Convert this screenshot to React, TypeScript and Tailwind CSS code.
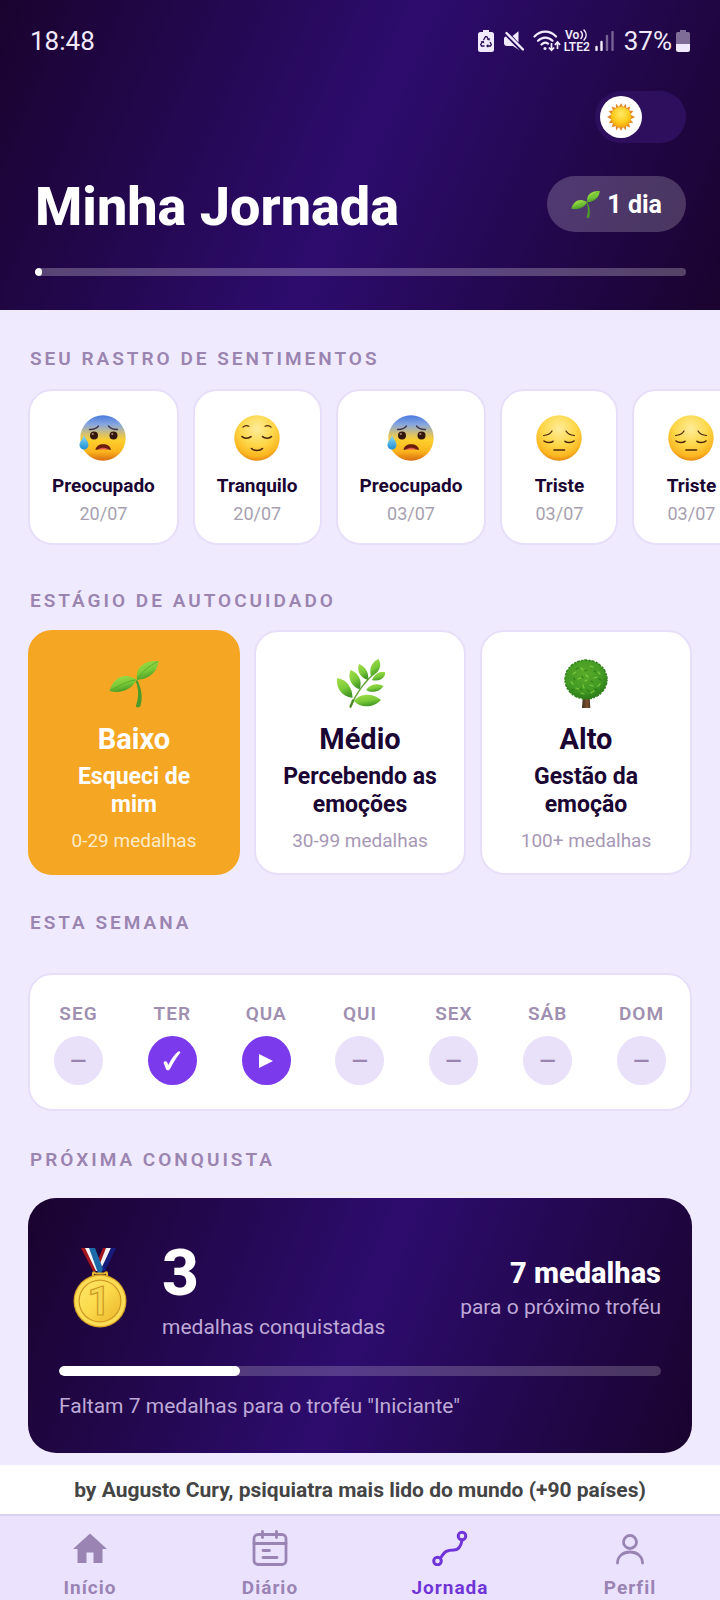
import { useState } from "react";
import type { ReactNode } from "react";

type FeelingKind = "worried" | "calm" | "sad";

type Feeling = {
  id: number;
  kind: FeelingKind;
  name: string;
  date: string;
};

const FEELINGS: Feeling[] = [
  { id: 1, kind: "worried", name: "Preocupado", date: "20/07" },
  { id: 2, kind: "calm", name: "Tranquilo", date: "20/07" },
  { id: 3, kind: "worried", name: "Preocupado", date: "03/07" },
  { id: 4, kind: "sad", name: "Triste", date: "03/07" },
  { id: 5, kind: "sad", name: "Triste", date: "03/07" },
];

const WEEK = [
  { label: "SEG", status: "empty" },
  { label: "TER", status: "done" },
  { label: "QUA", status: "today" },
  { label: "QUI", status: "empty" },
  { label: "SEX", status: "empty" },
  { label: "SÁB", status: "empty" },
  { label: "DOM", status: "empty" },
];

function FeelingFace({ kind }: { kind: FeelingKind }) {
  const fill = kind === "worried" ? "url(#face-worried)" : "url(#face-yellow)";

  return (
    <svg viewBox="0 0 46 46" className="h-[46px] w-[46px] overflow-visible" aria-hidden="true">
      <defs>
        <radialGradient id="face-yellow" cx="0.5" cy="0.3" r="0.74">
          <stop offset="0" stopColor="#ffec9a" />
          <stop offset="0.5" stopColor="#fdd748" />
          <stop offset="0.82" stopColor="#fbb41f" />
          <stop offset="1" stopColor="#dc7410" />
        </radialGradient>
        <linearGradient id="face-worried" x1="0" y1="0" x2="0" y2="1">
          <stop offset="0" stopColor="#4a7be0" />
          <stop offset="0.2" stopColor="#86a6e0" />
          <stop offset="0.42" stopColor="#d9c268" />
          <stop offset="0.55" stopColor="#fdcf2c" />
          <stop offset="0.8" stopColor="#fbb41d" />
          <stop offset="1" stopColor="#d96c10" />
        </linearGradient>
        <linearGradient id="drop" x1="0" y1="0" x2="0" y2="1">
          <stop offset="0" stopColor="#8fdcf8" />
          <stop offset="1" stopColor="#1c8fd2" />
        </linearGradient>
      </defs>
      <circle cx="23" cy="23" r="22.7" fill={fill} />

      {kind === "worried" && (
        <>
          <circle cx="14" cy="20.5" r="4" fill="#33170c" />
          <circle cx="33.5" cy="20.5" r="4" fill="#33170c" />
          <circle cx="12.8" cy="19" r="1.1" fill="#a58a79" />
          <circle cx="32.3" cy="19" r="1.1" fill="#a58a79" />
          <path d="M9.5 14.5c4 .2 7-1.200 9-3.500M37.500 14.500c-4 .2-7-1.200-9-3.500" fill="none" stroke="#3c3552" strokeWidth="1.300" strokeLinecap="round" />
          <path d="M15.500 35c.5-3.800 3.500-5.700 7.700-5.700s7.300 1.900 7.800 5.700c-4.800-1.500-10.700-1.500-15.500 0Z" fill="#6b1d0c" />
          <path d="M18.500 34.200c2-2 7.500-2 9.500 0Z" fill="#e5535a" />
          <path d="M4 20C3 24-.5 26.500-.5 30A4.500 4.500 0 0 0 8.500 30C8.500 26.500 5.500 24 4 20Z" fill="url(#drop)" />
        </>
      )}

      {kind === "calm" && (
        <g fill="none" stroke="#4a2409" strokeWidth="1.600" strokeLinecap="round">
          <path d="M9 12.200c1.500-1.700 3.800-1.900 6-1M31 11.200c2.200-.9 4.500-.7 6 1" strokeWidth="1.200" />
          <path d="M8 21.500c2 2.300 6.500 2.300 9 .2M28.500 21.700c2.500 2.100 7 2.100 9-.2" />
          <path d="M17.500 33.500c2.500 2.600 8.500 2.600 11 0" />
        </g>
      )}

      {kind === "sad" && (
        <g fill="none" stroke="#4a2409" strokeWidth="1.600" strokeLinecap="round">
          <path d="M7.500 20.500c4-.2 7-2 8.500-4.500M38.500 20.500c-4-.2-7-2-8.500-4.500" strokeWidth="1.200" />
          <path d="M8 26c2.500 2 7 2 9 .3M29 26.300c2 1.700 6.500 1.700 9-.3" />
          <path d="M18 35h10.500" />
        </g>
      )}
    </svg>
  );
}

function LeafGradient({ id }: { id: string }) {
  return (
    <linearGradient id={id} x1="0" y1="0" x2="0.4" y2="1">
      <stop offset="0" stopColor="#a5e04a" />
      <stop offset="0.6" stopColor="#7bca38" />
      <stop offset="1" stopColor="#459a25" />
    </linearGradient>
  );
}

function Sprout({ className }: { className: string }) {
  return (
    <svg viewBox="0 0 50 50" className={className} aria-hidden="true">
      <defs>
        <LeafGradient id="sprout-leaf" />
      </defs>
      <path d="M26.500 22c3.200 7 3.700 15 .5 24.500-.6 2.500 3.600 2.600 4.500.3C34 38.500 32.500 29.500 28.300 21Z" fill="#4c9c2b" />
      <path d="M.5 32C4 21 11 15.500 20 17.500c3 .6 5.500 1.500 7.500 3C24 29.500 12 35.500.5 32Z" fill="url(#sprout-leaf)" />
      <path d="M28 21C26 8.500 35 1 49.700 2 48.500 13 40 20 28 21Z" fill="url(#sprout-leaf)" />
      <path d="M2 31.700C9 27 17 22.500 26.500 21M28.500 20.500C33 13 40 6.500 49 2.500" fill="none" stroke="#55a32a" strokeWidth="0.800" />
    </svg>
  );
}

function Branch() {
  return (
    <svg viewBox="0 0 50 50" className="h-[50px] w-[50px]" aria-hidden="true">
      <defs>
        <LeafGradient id="branch-leaf" />
      </defs>
      <path d="M15.500 48C21 34 30 22 42 12" fill="none" stroke="#6aa53b" strokeWidth="1.600" strokeLinecap="round" />
      <g fill="url(#branch-leaf)">
        <path d="M17.500 39C17.500 29 12 20.500 2 19c-1 10 4 18 15.500 20Z" />
        <path d="M24.500 30.500C28 22 23.500 14 15.500 11 12.500 19 16 27 24.500 30.500Z" />
        <path d="M33 21C34.500 14 30 7.500 24 5c-2.500 7 1 13.500 9 16Z" />
        <path d="M36 17C33.500 10 37 2.500 43.500 0 47.500 7 44 14 36 17Z" />
        <path d="M37 21C40 14 45 12 51 13.500 49 20 43 23 37 21Z" />
        <path d="M31 31C35 25 42 24 48.500 27 45 33 36 34.500 31 31Z" />
        <path d="M19 42C25 34 38 34 46 41 38 49.500 25 49 19 42Z" />
      </g>
      <path d="M15.500 47.500l2.500-6" stroke="#4a8b26" strokeWidth="2.200" strokeLinecap="round" />
    </svg>
  );
}

function Tree() {
  return (
    <svg viewBox="0 0 50 50" className="h-[50px] w-[50px]" aria-hidden="true">
      <defs>
        <radialGradient id="tree-crown" cx="0.45" cy="0.35" r="0.65">
          <stop offset="0" stopColor="#58ab2a" />
          <stop offset="0.7" stopColor="#429923" />
          <stop offset="1" stopColor="#2b7a18" />
        </radialGradient>
        <linearGradient id="tree-trunk">
          <stop offset="0" stopColor="#3d2a17" />
          <stop offset="0.6" stopColor="#7a5130" />
          <stop offset="1" stopColor="#52351c" />
        </linearGradient>
      </defs>
      <path d="M22 36h6.500l.8 13h-8.300Z" fill="url(#tree-trunk)" />
      <ellipse cx="25" cy="20.500" rx="21" ry="19.500" fill="url(#tree-crown)" />
      <ellipse cx="25" cy="20.500" rx="21" ry="19.500" fill="none" stroke="#33821c" strokeWidth="1.500" strokeDasharray="2 1 3 1.500" />
      <g fill="none" stroke="#8ed449" strokeWidth="1.200" strokeLinecap="round" opacity="0.75">
        <path d="M12 15l3-2M20 9l2 2M29 7l3 1M37 13l2 2M10 23l2 2M17 20l3-1M25 16l2 2M33 19l3-1M15 29l3 1M22 26l1 3M29 26l3 1M37 27l2-2M20 34l3 1M30 34l3-2M24 22l2-1" />
      </g>
      <g fill="none" stroke="#1f6811" strokeWidth="1.200" strokeLinecap="round" opacity="0.6">
        <path d="M15 10l2-1M24 12l2-1M33 12l2 1M13 19l1 2M21 17l1 2M30 22l2 1M38 20l2 1M11 30l2 1M19 30l2 1M26 31l2 1M34 30l2 1" />
      </g>
    </svg>
  );
}

function Sun() {
  return (
    <svg viewBox="0 0 28 28" className="h-7 w-7" aria-hidden="true">
      <defs>
        <radialGradient id="sun-core" cx="0.5" cy="0.35" r="0.65">
          <stop offset="0" stopColor="#ffe96a" />
          <stop offset="0.6" stopColor="#ffce1f" />
          <stop offset="1" stopColor="#f5a50d" />
        </radialGradient>
      </defs>
      <path
        d="M14 0l2 4 2.900-3.300.4 4.400 4.100-1.700-1.300 4.200 4.300.5-2.900 3.300 4.500 2.600-4.500 2.500 2.700 3.300-4.200.5 1.200 4.200-4.100-1.400-.3 4.300L16 24l-2 4-2-4-2.900 3.400-.4-4.300-4.100 1.400 1.300-4.200-4.300-.5 2.800-3.300L0 14l4.400-2.600-2.800-3.300 4.300-.5-1.300-4.200 4.100 1.700.4-4.400L12 4Z"
        fill="#e58a2c"
      />
      <circle cx="14" cy="14" r="10.300" fill="url(#sun-core)" />
    </svg>
  );
}

function Medal() {
  return (
    <svg viewBox="0 0 54 80" className="h-20 w-[54px]" aria-hidden="true">
      <defs>
        <linearGradient id="medal-gold" x1="0" y1="0" x2="1" y2="1">
          <stop offset="0" stopColor="#ffe76a" />
          <stop offset="0.5" stopColor="#fbd94a" />
          <stop offset="1" stopColor="#eab52b" />
        </linearGradient>
      </defs>
      <path d="M30 0h4L27 18l-3-4Z" fill="#a3161b" />
      <path d="M33 0h5L29 22l-3-4Z" fill="#f1f1f6" />
      <path d="M38 0h5L32 23h-5Z" fill="#171b7c" />
      <path d="M8 0h5l12 23h-5Z" fill="#a3161b" />
      <path d="M12 0h5l11 23h-5Z" fill="#f6f6fa" />
      <path d="M16 0h6l8 21-2 4h-3Z" fill="#1d6aa8" />
      <path d="M20 29v-3.500c0-1.500 1.500-1.500 2.500 0h9c1-1.500 2.500-1.500 2.500 0V29" fill="none" stroke="#e4b52d" strokeWidth="2.200" />
      <circle cx="27" cy="53" r="26.500" fill="#d9a324" />
      <circle cx="27" cy="53" r="25.300" fill="#fbdc55" />
      <circle cx="27" cy="53" r="21.500" fill="#cf9a22" />
      <circle cx="27" cy="53" r="20.300" fill="url(#medal-gold)" />
      <text x="26" y="67" textAnchor="middle" fontSize="40" fontWeight="700" fontFamily="Roboto, sans-serif" fill="#f6d550" stroke="#cc981f" strokeWidth="1.200">
        1
      </text>
    </svg>
  );
}

function StatusBar() {
  return (
    <div className="flex h-9 items-center justify-between px-[30px] text-[26px] leading-9 text-[#f1eafc]">
      <span>18:48</span>
      <div className="flex items-center">
        <svg viewBox="0 0 16 22" className="mr-[10px] h-[22px] w-4" aria-label="Bateria protegida">
          <path d="M5 0h6v2h2.500A2.500 2.500 0 0 1 16 4.500v15a2.500 2.500 0 0 1-2.500 2.500h-11A2.500 2.500 0 0 1 0 19.500v-15A2.500 2.500 0 0 1 2.500 2H5Z" fill="currentColor" />
          <path d="M5.500 10l2-3.300h1.300l1.700 2.800M12 12l1.300 2.500-.8 1.500H9.500M6.500 16H3.500l-.8-1.500L4.500 11.500" fill="none" stroke="#260a52" strokeWidth="1.300" />
          <path d="M8.600 9.700l2.900.8.600-2.600ZM10.200 14v3.800L8 16ZM2.500 11.500l3.200-.8.600 2.800Z" fill="#260a52" />
        </svg>
        <svg viewBox="0 0 20 20" className="mr-[9px] h-5 w-5" aria-label="Som desligado">
          <path d="M2 5.500L16 20V19.800L9 15H3C1 15 0 14 0 12V8C0 6.500.8 5.500 2 5.500ZM8.500 5L14.500.300V11.500Z" fill="currentColor" />
          <path d="M2.500 2l16.500 16.500" stroke="currentColor" strokeWidth="2.400" strokeLinecap="round" />
        </svg>
        <svg viewBox="0 0 28 22" className="mr-[2px] h-[22px] w-7" aria-label="Wi-Fi">
          <path d="M1.500 6.500c6-6.500 15.500-6.500 21.500 0M5 10.800c4.200-4.300 10.500-4.300 14.500 0M8.500 14.500c2.300-2.200 4.700-2.200 6.500-.8" fill="none" stroke="currentColor" strokeWidth="2.200" strokeLinecap="round" />
          <circle cx="12" cy="18.500" r="1.500" fill="currentColor" />
          <path d="M18.500 13v7M15.800 17.500l2.700 2.800 2.700-2.800M24.500 19v-6.500M21.900 14.800l2.600-2.800 2.600 2.800" fill="none" stroke="currentColor" strokeWidth="1.700" />
        </svg>
        <span className="mr-1 flex w-7 flex-col items-center text-[12px] leading-3 font-semibold">
          <span className="flex items-center gap-px">
            Vo
            <svg viewBox="0 0 8 12" className="h-3 w-2" fill="none" stroke="currentColor" strokeWidth="1.500" strokeLinecap="round" aria-hidden="true">
              <path d="M1 2.500c1.600 2 1.600 5 0 7M4 1c2.800 3 2.800 7 0 10" />
            </svg>
          </span>
          <span>LTE2</span>
        </span>
        <svg viewBox="0 0 20 20" className="mr-[9px] h-5 w-5" aria-label="Sinal">
          <path d="M1.500 16v3M6.500 11v8" stroke="currentColor" strokeWidth="2.400" strokeLinecap="round" />
          <path d="M12 5v14M17.500 1v18" stroke="currentColor" strokeWidth="2.400" strokeLinecap="round" opacity="0.4" />
        </svg>
        <span className="mr-1">37%</span>
        <svg viewBox="0 0 14 22" className="h-[22px] w-[14px]" aria-label="Bateria">
          <path d="M4 0h6v2h2.500A1.500 1.500 0 0 1 14 3.500V14H0V3.500A1.500 1.500 0 0 1 1.500 2H4Z" fill="currentColor" opacity="0.45" />
          <path d="M0 14h14v5.500a2.500 2.500 0 0 1-2.500 2.500h-9A2.500 2.500 0 0 1 0 19.500Z" fill="currentColor" />
        </svg>
      </div>
    </div>
  );
}

function SectionTitle({ children }: { children: ReactNode }) {
  return (
    <h2 className="px-[30px] text-[19px] leading-6 font-semibold tracking-[3px] text-[#9a84b0] uppercase">
      {children}
    </h2>
  );
}

interface StageCardProps {
  icon: ReactNode;
  name: string;
  description: string;
  range: string;
  active?: boolean;
}

function StageCard({ icon, name, description, range, active = false }: StageCardProps) {
  return (
    <li
      className={`flex flex-1 flex-col items-center rounded-3xl border-2 px-6 pt-[27px] pb-5 text-center ${
        active
          ? "border-[#f5a623] bg-[#f5a623] text-white"
          : "border-[#e7dff9] bg-white text-[#1a0533]"
      }`}
    >
      {icon}
      <h3 className="mt-[13px] text-[29px] leading-[34px] font-bold">{name}</h3>
      <p className="mt-[7px] text-[23px] leading-7 font-bold">{description}</p>
      <p className={`mt-[10px] text-[19px] leading-6 ${active ? "text-[#fdebc9]" : "text-[#a797b6]"}`}>
        {range}
      </p>
    </li>
  );
}

function DayMark({ status }: { status: string }) {
  if (status === "done") {
    return (
      <span className="mt-[10px] flex h-[49px] w-[49px] items-center justify-center rounded-full bg-[#7c3aed]">
        <svg viewBox="0 0 18 20" className="h-5 w-[18px]" aria-label="Feito">
          <path d="M.5 11.500c.8-1.500 3-1.800 3.600-.3L5.300 14C8 8.500 11.500 3.500 14.800.800c1.200-.9 3.300-.2 2.300 1.100C13.500 6.500 10 12 7 18c-.9 1.800-3.400 1.700-4 0Z" fill="#fff" />
        </svg>
      </span>
    );
  }

  if (status === "today") {
    return (
      <span className="mt-[10px] flex h-[49px] w-[49px] items-center justify-center rounded-full bg-[#7c3aed]">
        <svg viewBox="0 0 14 14" className="h-[14px] w-[14px]" aria-label="Hoje">
          <path d="M0 0L14 7 0 14Z" fill="#fff" />
        </svg>
      </span>
    );
  }

  return (
    <span className="mt-[10px] flex h-[49px] w-[49px] items-center justify-center rounded-full bg-[#e9e1fa] text-[29px] leading-[34px] text-[#9a84b0]">
      –
    </span>
  );
}

function HomeIcon() {
  return (
    <svg viewBox="0 0 36 36" className="h-9 w-9" aria-hidden="true">
      <path d="M18 3.500L35 19h-4.500v14H21.500V22.500h-7V33H5.500V19H1Z" fill="currentColor" />
    </svg>
  );
}

function DiaryIcon() {
  return (
    <svg viewBox="0 0 36 36" className="h-9 w-9" fill="none" stroke="currentColor" strokeWidth="2.800" strokeLinecap="round" aria-hidden="true">
      <rect x="2" y="4.500" width="32" height="30" rx="4" />
      <path d="M2 13.500h32M10.500 1.500v6M24.500 1.500v6M11 20.500h6.500M11 27.500h14" />
    </svg>
  );
}

function JourneyIcon() {
  return (
    <svg viewBox="0 0 36 36" className="h-9 w-9" fill="none" stroke="currentColor" strokeWidth="3" strokeLinecap="round" aria-hidden="true">
      <circle cx="30" cy="6" r="3.800" />
      <circle cx="5.500" cy="31" r="3.800" />
      <path d="M30 10.500c-1 5.500-3 9.500-8 9.500-7 0-9 1-13.500 8" />
    </svg>
  );
}

function ProfileIcon() {
  return (
    <svg viewBox="0 0 36 36" className="h-9 w-9" fill="none" stroke="currentColor" strokeWidth="2.800" strokeLinecap="round" aria-hidden="true">
      <circle cx="18" cy="12" r="6.500" />
      <path d="M5.500 33c0-6.800 5.500-11 12.500-11s12.500 4.200 12.500 11" />
    </svg>
  );
}

const TABS = [
  { label: "Início", icon: <HomeIcon /> },
  { label: "Diário", icon: <DiaryIcon /> },
  { label: "Jornada", icon: <JourneyIcon /> },
  { label: "Perfil", icon: <ProfileIcon /> },
];

export default function App() {
  const [light, setLight] = useState(true);
  const [tab, setTab] = useState("Jornada");

  const dayProgress = 1;
  const medals = 3;
  const nextTrophy = 10;

  return (
    <div className="flex min-h-screen flex-col overflow-x-hidden bg-[#f0eaff] font-[Roboto,sans-serif] text-[#1a0533]">
      <header className="bg-[linear-gradient(113deg,#1a032e,#2d0c6e_50%,#1a032e)] pt-[23px] pb-[34px] text-white">
        <StatusBar />

        <div className="pr-[34px] pl-[35px]">
          <div className="mt-8 flex justify-end">
            <button
              type="button"
              role="switch"
              aria-checked={!light}
              aria-label="Modo escuro"
              onClick={() => setLight(!light)}
              className={`flex h-[52px] w-[91px] items-center rounded-full bg-[#2d0f5e] px-[5px] ${
                light ? "justify-start" : "justify-end"
              }`}
            >
              <span className="flex h-[42px] w-[42px] items-center justify-center rounded-full bg-white">
                <Sun />
              </span>
            </button>
          </div>

          <div className="mt-[33px] flex items-start justify-between">
            <h1 className="text-[54px] leading-[62px] font-extrabold">Minha Jornada</h1>
            <div className="flex h-14 items-center gap-[7px] rounded-full bg-white/20 px-6 pt-px text-[25px] leading-8 font-bold">
              <Sprout className="h-[29px] w-[29px]" />
              1 dia
            </div>
          </div>

          <div className="mt-[30px] h-2 overflow-hidden rounded-full bg-white/25">
            <div className="h-2 rounded-full bg-white" style={{ width: `${dayProgress}%` }} />
          </div>
        </div>
      </header>

      <main className="flex-1 pb-3">
        <section className="pt-[37px]">
          <SectionTitle>Seu rastro de sentimentos</SectionTitle>
          <ul className="mt-[18px] flex gap-[14px] overflow-hidden pl-7">
            {FEELINGS.map((feeling) => (
              <li
                key={feeling.id}
                className="flex min-w-[118px] shrink-0 flex-col items-center rounded-3xl border-2 border-[#e7dff9] bg-white px-[22px] pt-6 pb-[18px]"
              >
                <FeelingFace kind={feeling.kind} />
                <p className="mt-[13px] text-[19px] leading-6 font-bold">{feeling.name}</p>
                <p className="mt-[5px] text-[18px] leading-[22px] text-[#a79fb0]">{feeling.date}</p>
              </li>
            ))}
          </ul>
        </section>

        <section className="pt-11">
          <SectionTitle>Estágio de autocuidado</SectionTitle>
          <ul className="mt-[17px] flex gap-[14px] px-7">
            <StageCard
              active
              icon={<Sprout className="h-[50px] w-[50px]" />}
              name="Baixo"
              description="Esqueci de mim"
              range="0-29 medalhas"
            />
            <StageCard icon={<Branch />} name="Médio" description="Percebendo as emoções" range="30-99 medalhas" />
            <StageCard icon={<Tree />} name="Alto" description="Gestão da emoção" range="100+ medalhas" />
          </ul>
        </section>

        <section className="pt-9">
          <SectionTitle>Esta semana</SectionTitle>
          <div className="px-7">
            <ul className="mt-[38px] flex justify-between rounded-3xl border-2 border-[#e7dff9] bg-white px-6 pt-[27px] pb-6">
              {WEEK.map((day) => (
                <li key={day.label} className="flex w-[49px] flex-col items-center">
                  <span className="text-[19px] leading-6 font-semibold tracking-[1px] text-[#9f8fb0]">
                    {day.label}
                  </span>
                  <DayMark status={day.status} />
                </li>
              ))}
            </ul>
          </div>
        </section>

        <section className="pt-[37px]">
          <SectionTitle>Próxima conquista</SectionTitle>
          <div className="px-7">
            <div className="mt-[26px] rounded-[28px] bg-[linear-gradient(111deg,#1a032e,#2d0c6e_50%,#1a032e)] px-[31px] pt-[38px] pb-[34px] text-[21px] leading-[26px] text-[#bfa9d8]">
              <div className="flex items-center justify-between">
                <div className="flex items-center gap-[35px] pl-[14px]">
                  <Medal />
                  <div>
                    <p className="text-[64px] leading-[76px] font-extrabold text-white">{medals}</p>
                    <p className="mt-[2px]">medalhas conquistadas</p>
                  </div>
                </div>
                <div className="text-right">
                  <p className="text-[29px] leading-[34px] font-extrabold text-white">
                    {nextTrophy - medals} medalhas
                  </p>
                  <p className="mt-1">para o próximo troféu</p>
                </div>
              </div>
              <div className="mt-[26px] h-[10px] overflow-hidden rounded-full bg-white/20">
                <div
                  className="h-[10px] rounded-full bg-white"
                  style={{ width: `${(medals / nextTrophy) * 100}%` }}
                />
              </div>
              <p className="mt-[17px]">Faltam {nextTrophy - medals} medalhas para o troféu "Iniciante"</p>
            </div>
          </div>
        </section>
      </main>

      <p className="bg-white pt-px text-center text-[21px] leading-[48px] font-bold text-[#444444]">
        by Augusto Cury, psiquiatra mais lido do mundo (+90 países)
      </p>

      <nav className="grid grid-cols-4 border-t-2 border-[#d9d0f0] bg-[#ebe3fe] pt-[14px]">
        {TABS.map((item) => (
          <button
            key={item.label}
            type="button"
            onClick={() => setTab(item.label)}
            aria-current={tab === item.label ? "page" : undefined}
            className={`flex flex-col items-center ${tab === item.label ? "text-[#7035d8]" : "text-[#9a84b4]"}`}
          >
            {item.icon}
            <span className="mt-[10px] text-[19px] leading-6 font-bold tracking-[1px]">{item.label}</span>
          </button>
        ))}
      </nav>
    </div>
  );
}
